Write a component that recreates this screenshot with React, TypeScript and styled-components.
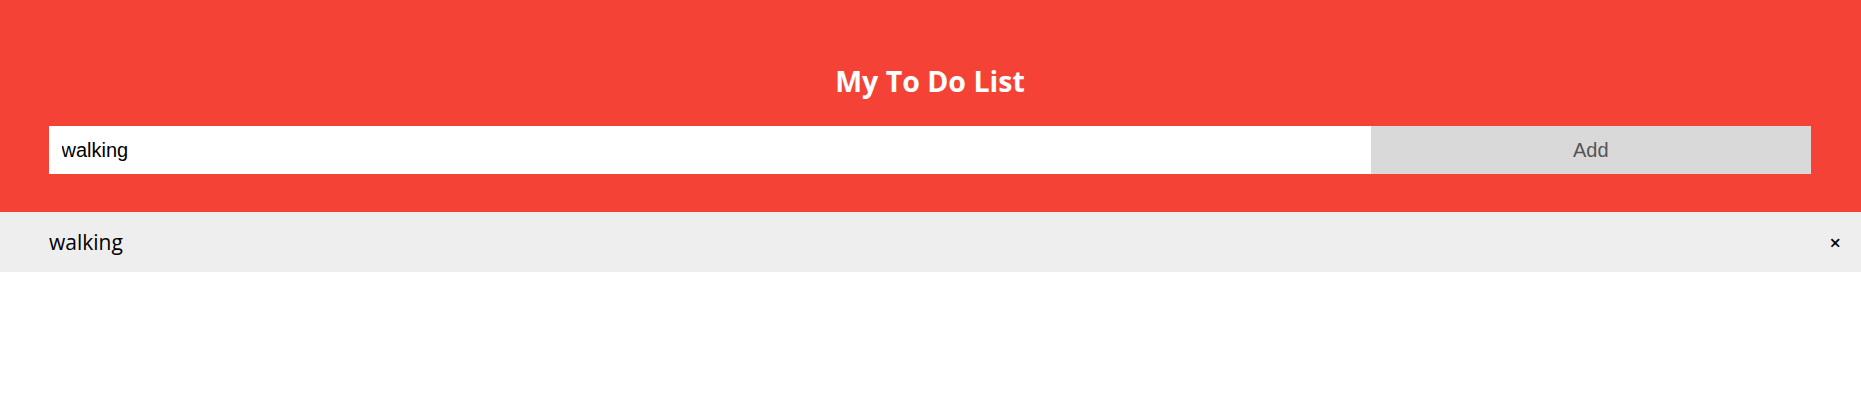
import React, { useState } from "react"
import styled, { createGlobalStyle } from "styled-components"

const GlobalStyle = createGlobalStyle`
  * {
    box-sizing: border-box;
  }
  body {
    margin: 0;
    background: #fff;
    font-family: "Open Sans", "Noto Sans", sans-serif;
  }
`

const Header = styled.div`
  background: #f44336;
  padding: 37px 50px 38px 49px;
  color: #fff;
  text-align: center;
`

const Title = styled.h2`
  margin: 25px 0 25px;
  font-size: 28.5px;
  line-height: 39px;
  font-weight: 700;
`

const InputRow = styled.div`
  display: flex;
`

const TaskInput = styled.input`
  flex: 0 0 75%;
  border: none;
  border-radius: 0;
  outline: none;
  padding: 12px 12.5px;
  height: 48px;
  font-family: "Liberation Sans", Arial, sans-serif;
  font-size: 20px;
  color: #000;
  background: #fff;
`

const AddButton = styled.button`
  flex: 0 0 25%;
  border: none;
  border-radius: 0;
  height: 48px;
  background: #d9d9d9;
  color: #555;
  font-family: "Liberation Sans", Arial, sans-serif;
  font-size: 20px;
  cursor: pointer;
  transition: background 0.3s;

  &:hover {
    background: #bbb;
  }
`

const List = styled.ul`
  margin: 0;
  padding: 0;
  list-style: none;
`

const Item = styled.li<{ $odd: boolean }>`
  position: relative;
  height: 60px;
  padding: 0 10px 0 49px;
  display: flex;
  align-items: center;
  background: ${p => (p.$odd ? "#eee" : "#f9f9f9")};
  font-size: 21px;
  color: #000;
`

const Close = styled.span`
  position: absolute;
  right: 0;
  top: 0;
  height: 100%;
  padding: 0 20px;
  display: flex;
  align-items: center;
  font-size: 20px;
  font-weight: 600;
  cursor: pointer;

  &:hover {
    background: #f44336;
    color: #fff;
  }
`

export default function App() {
  const [text, setText] = useState("walking")
  const [todos, setTodos] = useState<string[]>(["walking"])

  const addTodo = () => {
    if (!text.trim()) return
    setTodos(prev => [...prev, text])
  }

  return (
    <>
      <GlobalStyle />
      <Header>
        <Title>My To Do List</Title>
        <InputRow>
          <TaskInput
            value={text}
            placeholder="Title..."
            onChange={e => setText(e.target.value)}
          />
          <AddButton onClick={addTodo}>Add</AddButton>
        </InputRow>
      </Header>
      <List>
        {todos.map((todo, i) => (
          <Item key={i} $odd={i % 2 === 0}>
            {todo}
            <Close onClick={() => setTodos(prev => prev.filter((_, j) => j !== i))}>
              ×
            </Close>
          </Item>
        ))}
      </List>
    </>
  )
}
